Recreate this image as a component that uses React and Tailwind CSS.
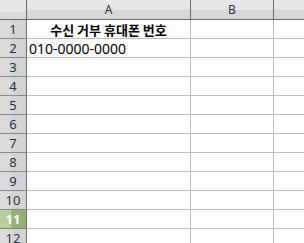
import React from "react";

const rows = Array.from({ length: 12 }, (_, i) => i + 1);

export default function App() {
  return (
    <div
      className="w-[304px] h-[243px] overflow-hidden bg-white"
      style={{ fontFamily: '"Noto Sans", "Noto Sans CJK KR", sans-serif' }}
    >
      {/* column header */}
      <div className="flex h-[20px] border-b border-[#6e6e6e] bg-[linear-gradient(to_bottom,#e7e7e7_0%,#e4e4e4_50%,#d8d8d8_55%,#d6d6d6_100%)]">
        <div className="w-[27px] shrink-0 border-r border-[#6e6e6e] bg-[linear-gradient(to_bottom,#e7e7e7_0%,#e6e6e6_60%,#dcdcdc_65%,#dadada_100%)]"></div>
        <div className="w-[164px] shrink-0 border-r border-[#6e6e6e] flex items-center justify-center text-[12px] text-[#2b3646] leading-none">
          A
        </div>
        <div className="w-[83px] shrink-0 border-r border-[#6e6e6e] flex items-center justify-center text-[12px] text-[#2b3646] leading-none">
          B
        </div>
        <div className="flex-1"></div>
      </div>
      {rows.map((r) => {
        const active = r === 11;
        return (
          <div key={r} className="flex h-[19px]">
            <div
              className={
                active
                  ? "w-[27px] shrink-0 border-r border-b border-r-[#6e6e6e] border-b-[#7c8c6c] flex items-center justify-center text-[13px] font-bold text-white leading-none bg-[linear-gradient(to_right,#b7cea2_0%,#b7cea2_40%,#92b376_46%,#8fb072_100%)]"
                  : "w-[27px] shrink-0 border-r border-b border-r-[#6e6e6e] border-b-[#8a8a8a] flex items-center justify-center text-[13px] text-[#243246] leading-none bg-[linear-gradient(to_right,#dcdcdc_0%,#dadada_40%,#d4d4d4_46%,#d3d3d3_100%)]"
              }
            >
              {r}
            </div>
            <div className="w-[164px] shrink-0 border-r border-b border-[#bdbdbd] flex items-center">
              {r === 1 && (
                <div
                  className="w-full text-center text-[13px] font-bold text-black leading-none pt-[1px]"
                  style={{ fontFamily: '"Noto Sans CJK KR", sans-serif' }}
                >
                  수신 거부 휴대폰 번호
                </div>
              )}
              {r === 2 && (
                <div className="pl-[2px] text-[14px] text-black leading-none pt-[1px]">
                  010-0000-0000
                </div>
              )}
            </div>
            <div className="w-[83px] shrink-0 border-r border-b border-[#bdbdbd]"></div>
            <div className="flex-1 border-b border-[#bdbdbd]"></div>
          </div>
        );
      })}
    </div>
  );
}
